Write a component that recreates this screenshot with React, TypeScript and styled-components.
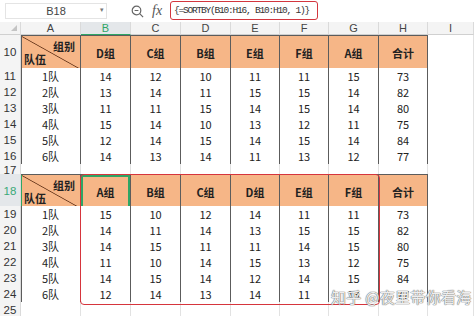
import React from "react";
import styled, { createGlobalStyle, css } from "styled-components";

const GlobalStyle = createGlobalStyle`
  html, body {
    margin: 0;
    padding: 0;
    background: #ffffff;
  }
  body {
    font-family: "Noto Sans CJK SC", "Liberation Sans", sans-serif;
  }
`;

const COLS = "21px 60px 50px 50px 50px 49px 49px 50px 49px 1fr";
const ORANGE = "#f6b687";
const DARK = "#5c5c5c";
const GRID = "#e2e2e2";
const GREEN = "#2fa565";

const Screen = styled.div`
  position: relative;
  width: 474px;
  height: 316px;
  overflow: hidden;
  background: #fff;
`;

const FormulaBar = styled.div`
  display: flex;
  align-items: center;
  height: 22px;
  padding-left: 5px;
  box-sizing: border-box;
  background: #fff;
`;

const NameBox = styled.div`
  position: relative;
  display: flex;
  align-items: center;
  justify-content: center;
  width: 102px;
  height: 16px;
  border: 1px solid #e4e4e4;
  box-sizing: border-box;
  font-size: 11px;
  color: #444;
  font-family: "Liberation Sans", sans-serif;
`;

const Caret = styled.span`
  position: absolute;
  right: 2px;
  top: 2px;
  font-size: 7px;
  color: #777;
`;

const ToolIcons = styled.div`
  display: flex;
  align-items: center;
  gap: 8px;
  margin-left: 24px;
  width: 39px;
  color: #555;
`;

const Fx = styled.span`
  font-family: "Liberation Serif", serif;
  font-style: italic;
  font-size: 14px;
  color: #555;
`;

const FormulaBox = styled.div`
  display: flex;
  align-items: center;
  width: 148px;
  height: 19px;
  margin-top: -1px;
  border: 1.5px solid #d3363e;
  border-radius: 3px;
  box-sizing: border-box;
  padding-left: 3px;
  font-family: "Liberation Mono", monospace;
  font-size: 9.5px;
  letter-spacing: -1.2px;
  color: #333;
  white-space: nowrap;
`;

const Row = styled.div<{ $h: number }>`
  display: grid;
  grid-template-columns: ${COLS};
  height: ${(p) => p.$h}px;
`;

const HeadCell = styled.div<{ $active?: boolean }>`
  display: flex;
  align-items: center;
  justify-content: center;
  background: ${(p) => (p.$active ? "#e4e7ea" : "#f4f4f4")};
  color: ${(p) => (p.$active ? GREEN : "#444")};
  border-right: 1px solid #dadada;
  border-bottom: 1px solid ${(p) => (p.$active ? GREEN : "#d0d0d0")};
  box-sizing: border-box;
  font-family: "Liberation Sans", sans-serif;
  font-size: 11px;
`;

const Corner = styled(HeadCell)`
  position: relative;
  &::after {
    content: "";
    position: absolute;
    right: 3px;
    bottom: 3px;
    border-left: 6px solid transparent;
    border-bottom: 6px solid #c4c4c4;
  }
`;

const RowNum = styled(HeadCell)`
  font-size: 11.5px;
  color: ${(p) => (p.$active ? "#3aa978" : "#333")};
  border-bottom: 1px solid #dedede;
`;

type Tone = "head" | "data" | "blank";

const Cell = styled.div<{ $tone: Tone; $left?: boolean; $top?: boolean; $sel?: boolean }>`
  display: flex;
  align-items: center;
  justify-content: center;
  box-sizing: border-box;
  font-size: 11px;
  color: #222;
  background: ${(p) => (p.$tone === "head" ? ORANGE : "#fff")};
  font-weight: ${(p) => (p.$tone === "head" ? 700 : 400)};
  border-right: 1px solid ${(p) => (p.$tone === "blank" ? GRID : DARK)};
  border-bottom: 1px solid ${(p) => (p.$tone === "blank" ? GRID : DARK)};
  ${(p) =>
    p.$left &&
    css`
      box-shadow: inset 1px 0 0 ${DARK};
    `}
  ${(p) =>
    p.$top &&
    css`
      border-top: 1px solid ${DARK};
    `}
  ${(p) =>
    p.$sel &&
    css`
      box-shadow: inset 0 0 0 2px ${GREEN};
    `}
`;

const DiagCell = styled.div<{ $top?: boolean; $mark?: boolean }>`
  display: flex;
  flex-direction: column;
  justify-content: space-between;
  padding: 2px 3px 3px 3px;
  box-sizing: border-box;
  font-size: 11px;
  font-weight: 700;
  color: #222;
  background: linear-gradient(
    to top right,
    ${ORANGE} calc(50% - 0.8px),
    #6b3a1e 50%,
    ${ORANGE} calc(50% + 0.8px)
  );
  border-right: 1px solid ${DARK};
  border-bottom: 1px solid ${(p) => (p.$mark ? GREEN : DARK)};
  box-shadow: inset 1px 0 0 ${(p) => (p.$mark ? GREEN : DARK)};
  ${(p) =>
    p.$top &&
    css`
      border-top: 1px solid ${DARK};
    `}
`;

const DiagTop = styled.span`
  align-self: flex-end;
  line-height: 13px;
  margin-top: 2px;
  margin-right: 2px;
`;

const DiagBottom = styled.span`
  align-self: flex-start;
  line-height: 13px;
`;

const RedFrame = styled.div`
  position: absolute;
  left: 80px;
  top: 174px;
  width: 300px;
  height: 131px;
  border: 1.5px solid #d6353d;
  border-radius: 4px;
  box-sizing: border-box;
  pointer-events: none;
`;

const Watermark = styled.div`
  position: absolute;
  left: 331px;
  top: 286px;
  font-size: 15px;
  letter-spacing: 0.3px;
  color: rgba(255, 255, 255, 0.9);
  text-shadow: 0 0 1px #777, 0 0 1px #777, 0 0 1px #888;
  white-space: nowrap;
`;

const LETTERS = ["A", "B", "C", "D", "E", "F", "G", "H", "I"];

const top = {
  groups: ["D组", "C组", "B组", "E组", "F组", "A组"],
  rows: [
    [14, 12, 10, 11, 11, 15],
    [13, 14, 11, 15, 15, 14],
    [11, 11, 15, 14, 15, 14],
    [15, 14, 10, 13, 12, 11],
    [12, 14, 15, 14, 15, 14],
    [14, 13, 14, 11, 13, 12],
  ],
};

// sort each row by the header (A..F), like SORTBY does
const order = top.groups
  .map((g, i) => ({ g, i }))
  .sort((a, b) => a.g.localeCompare(b.g));
const bottom = {
  groups: order.map((o) => o.g),
  rows: top.rows.map((r) => order.map((o) => r[o.i])),
};

const sum = (r: number[]) => r.reduce((a, b) => a + b, 0);

const SearchIcon = () => (
  <svg width="13" height="13" viewBox="0 0 13 13" fill="none" stroke="#666" strokeWidth="1.2">
    <circle cx="5.5" cy="5.5" r="4.3" />
    <path d="M3.6 5.5h3.8M8.7 8.7l3.4 3.4" />
  </svg>
);

const Table = ({
  first,
  data,
  selected,
}: {
  first: number;
  data: { groups: string[]; rows: number[][] };
  selected?: boolean;
}) => (
  <>
    <Row $h={selected ? 32 : 33}>
      <RowNum $active={selected}>{first}</RowNum>
      <DiagCell $top $mark={selected}>
        <DiagTop>组别</DiagTop>
        <DiagBottom>队伍</DiagBottom>
      </DiagCell>
      {data.groups.map((g, i) => (
        <Cell key={g} $tone="head" $top $sel={selected && i === 0}>
          {g}
        </Cell>
      ))}
      <Cell $tone="head" $top>
        合计
      </Cell>
      <Cell $tone="blank" />
    </Row>
    {data.rows.map((r, i) => (
      <Row $h={16} key={i}>
        <RowNum>{first + i + 1}</RowNum>
        <Cell $tone="data" $left>
          {i + 1}队
        </Cell>
        {r.map((v, j) => (
          <Cell $tone="data" key={j}>
            {v}
          </Cell>
        ))}
        <Cell $tone="data">{sum(r)}</Cell>
        <Cell $tone="blank" />
      </Row>
    ))}
  </>
);

const BlankRow = ({ n, h }: { n: number; h: number }) => (
  <Row $h={h}>
    <RowNum>{n}</RowNum>
    {LETTERS.map((l) => (
      <Cell $tone="blank" key={l} />
    ))}
  </Row>
);

export default function App() {
  return (
    <Screen>
      <GlobalStyle />
      <FormulaBar>
        <NameBox>
          B18
          <Caret>▾</Caret>
        </NameBox>
        <ToolIcons>
          <SearchIcon />
          <Fx>fx</Fx>
        </ToolIcons>
        <FormulaBox>{"{=SORTBY(B10:H16, B10:H10, 1)}"}</FormulaBox>
      </FormulaBar>
      <Row $h={13}>
        <Corner />
        {LETTERS.map((l) => (
          <HeadCell key={l} $active={l === "B"}>
            {l}
          </HeadCell>
        ))}
      </Row>
      <Table first={10} data={top} />
      <BlankRow n={17} h={10} />
      <Table first={18} data={bottom} selected />
      <BlankRow n={25} h={16} />
      <RedFrame />
      <Watermark>知乎 @夜里带你看海</Watermark>
    </Screen>
  );
}
